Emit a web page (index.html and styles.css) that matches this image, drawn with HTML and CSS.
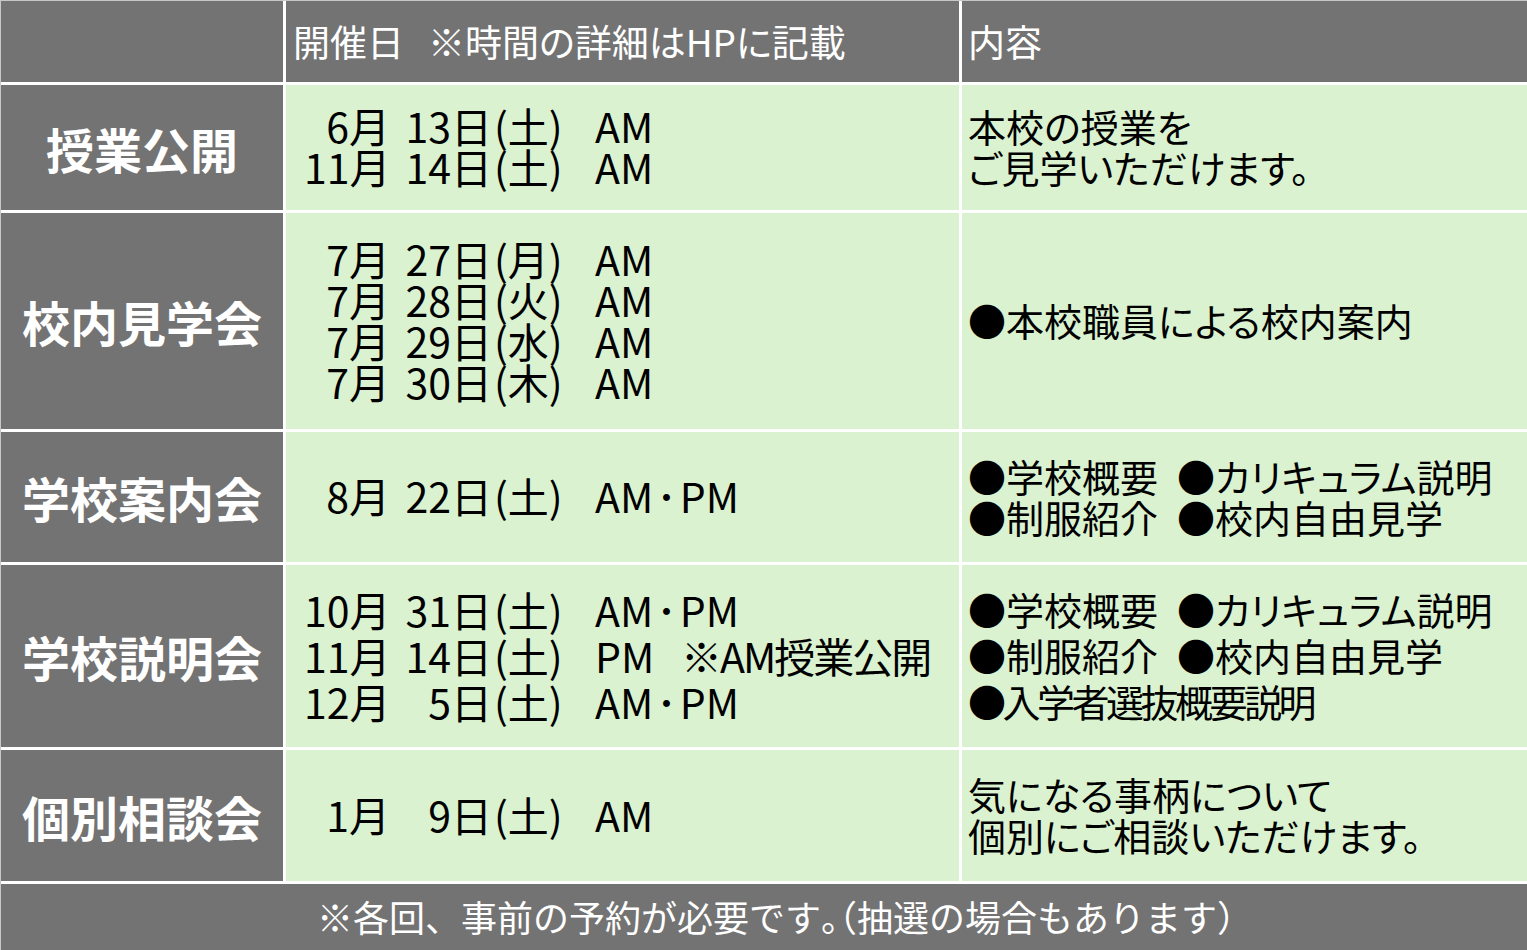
FILE: index.html
```
<!DOCTYPE html>
<html lang="ja">
<head>
<meta charset="utf-8">
<title>学校行事日程</title>
<link rel="stylesheet" href="styles.css">
</head>
<body>
<div class="table">
  <div class="cell head"></div>
  <div class="cell head hdate">開催日<span class="hsp"></span>※時間の詳細はHPに記載</div>
  <div class="cell head hcont">内容</div>

  <div class="cell label">授業公開</div>
  <div class="cell date">
    <div class="lines">
      <div class="dl"><span class="m">6月</span><span class="d">13日</span><span class="w">(土)</span><span class="t">AM</span></div>
      <div class="dl"><span class="m">11月</span><span class="d">14日</span><span class="w">(土)</span><span class="t">AM</span></div>
    </div>
  </div>
  <div class="cell cont"><div class="lines">本校の授業を<br>ご見学いただけます。</div></div>

  <div class="cell label">校内見学会</div>
  <div class="cell date">
    <div class="lines">
      <div class="dl"><span class="m">7月</span><span class="d">27日</span><span class="w">(月)</span><span class="t">AM</span></div>
      <div class="dl"><span class="m">7月</span><span class="d">28日</span><span class="w">(火)</span><span class="t">AM</span></div>
      <div class="dl"><span class="m">7月</span><span class="d">29日</span><span class="w">(水)</span><span class="t">AM</span></div>
      <div class="dl"><span class="m">7月</span><span class="d">30日</span><span class="w">(木)</span><span class="t">AM</span></div>
    </div>
  </div>
  <div class="cell cont"><div class="lines">●本校職員による校内案内</div></div>

  <div class="cell label">学校案内会</div>
  <div class="cell date">
    <div class="lines">
      <div class="dl"><span class="m">8月</span><span class="d">22日</span><span class="w">(土)</span><span class="t">AM<span class="dot">･</span>PM</span></div>
    </div>
  </div>
  <div class="cell cont"><div class="lines">●学校概要<span class="sp"></span>●カリキュラム説明<br>●制服紹介<span class="sp"></span>●校内自由見学</div></div>

  <div class="cell label">学校説明会</div>
  <div class="cell date">
    <div class="lines wide">
      <div class="dl"><span class="m">10月</span><span class="d">31日</span><span class="w">(土)</span><span class="t">AM<span class="dot">･</span>PM</span></div>
      <div class="dl"><span class="m">11月</span><span class="d">14日</span><span class="w">(土)</span><span class="t">PM</span><span class="note">※AM授業公開</span></div>
      <div class="dl"><span class="m">12月</span><span class="d">5日</span><span class="w">(土)</span><span class="t">AM<span class="dot">･</span>PM</span></div>
    </div>
  </div>
  <div class="cell cont"><div class="lines wide">●学校概要<span class="sp"></span>●カリキュラム説明<br>●制服紹介<span class="sp"></span>●校内自由見学<br><span class="tight">●入学者選抜概要説明</span></div></div>

  <div class="cell label">個別相談会</div>
  <div class="cell date">
    <div class="lines">
      <div class="dl"><span class="m">1月</span><span class="d">9日</span><span class="w">(土)</span><span class="t">AM</span></div>
    </div>
  </div>
  <div class="cell cont"><div class="lines">気になる事柄について<br>個別にご相談いただけます。</div></div>

  <div class="cell foot">※各回、事前の予約が必要です<span class="p">。</span><span class="p">（</span>抽選の場合もあります<span class="p">）</span></div>
</div>
</body>
</html>
```

FILE: styles.css
```
html, body {
  margin: 0;
  padding: 0;
  background: #ffffff;
}

body {
  font-family: "Noto Sans CJK JP", "Noto Sans", sans-serif;
  width: 1527px;
  height: 950px;
  overflow: hidden;
}

.table {
  display: grid;
  grid-template-columns: 282px 673px 565px;
  grid-template-rows: 81px 125px 216px 130px 182px 131px 67px;
  gap: 3px;
  background: #ffffff;
  border-top: 1px solid #c8c8c8;
  border-left: 1px solid #c8c8c8;
  box-sizing: border-box;
  width: 1527px;
}

.cell {
  display: flex;
  align-items: center;
  box-sizing: border-box;
}

.head {
  background: #737373;
  color: #ffffff;
  font-size: 37px;
  font-feature-settings: "palt";
  padding-bottom: 2px;
}

.hsp {
  display: inline-block;
  width: 24px;
}

.hdate {
  padding-left: 7px;
}

.hcont {
  padding-left: 6px;
}

.label {
  background: #737373;
  color: #ffffff;
  font-size: 48px;
  font-weight: bold;
  justify-content: center;
}

.date {
  background: #daf2d0;
  color: #000000;
  font-size: 41px;
  padding-left: 18px;
}

.cont {
  background: #daf2d0;
  color: #000000;
  font-size: 38px;
  font-feature-settings: "palt";
  padding-left: 6px;
}

.sp {
  display: inline-block;
  width: 19px;
}

.tight {
  letter-spacing: -3.5px;
}

.lines {
  line-height: 41px;
  margin-top: -3px;
}

.lines.wide {
  line-height: 46px;
}

.dl {
  display: flex;
  white-space: nowrap;
}

.m {
  width: 86px;
  text-align: right;
}

.d {
  width: 102px;
  text-align: right;
}

.w {
  width: 103px;
  padding-left: 2px;
  box-sizing: border-box;
}

.t {
  width: 86px;
}

.dot {
  display: inline-block;
  padding: 0 3px;
}

.note {
  letter-spacing: -2px;
  font-feature-settings: "palt";
}

.foot {
  grid-column: 1 / 4;
  background: #737373;
  color: #ffffff;
  font-size: 36px;
  justify-content: center;
  padding-bottom: 4px;
  padding-left: 24px;
}

.foot .p {
  font-feature-settings: "halt";
}
```
